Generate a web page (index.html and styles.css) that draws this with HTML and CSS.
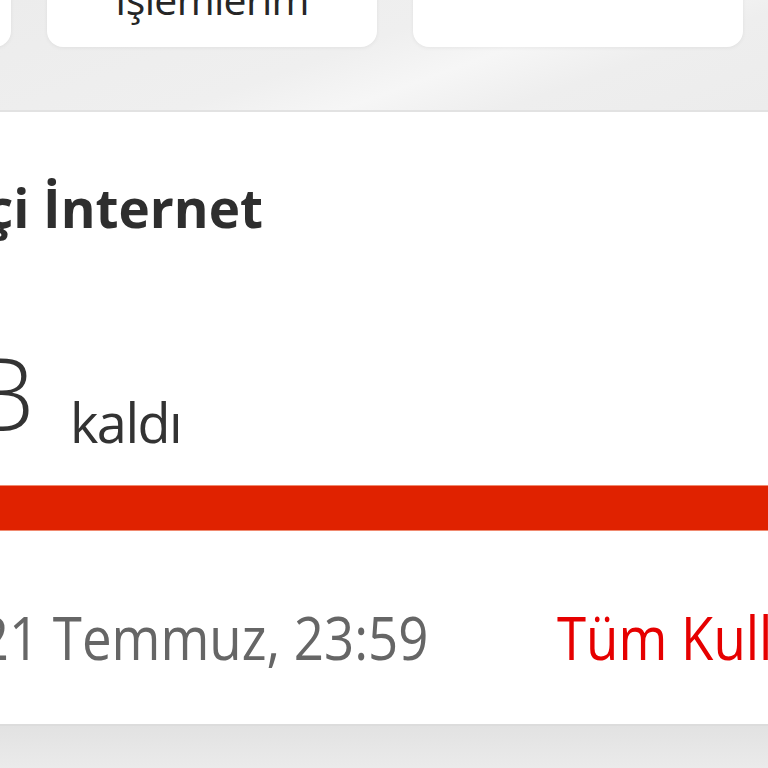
FILE: index.html
```html
<!DOCTYPE html>
<html lang="tr">
<head>
<meta charset="utf-8">
<title>Yurtiçi İnternet</title>
<link rel="stylesheet" href="styles.css">
</head>
<body>
  <div class="top">
    <div class="cards">
      <div class="card"></div>
      <div class="card"><span class="card-label">İşlemlerim</span></div>
      <div class="card"></div>
      <div class="card"></div>
    </div>
  </div>
  <main class="usage">
    <div class="clip" style="width:263px">
      <h2 class="title">Yurtiçi İnternet</h2>
    </div>
    <div class="amount">
      <div class="clip" style="width:34px">
        <span class="big">12 GB</span>
      </div>
      <span class="left">kaldı</span>
    </div>
    <div class="bar"></div>
    <div class="meta">
      <div class="clip" style="width:428px">
        <span class="date">Yenilenme: 21 Temmuz, 23:59</span>
      </div>
      <a class="link">Tüm Kullanımlar</a>
    </div>
  </main>
  <div class="bottom"></div>
</body>
</html>
```
FILE: styles.css
```css
html, body {
  margin: 0;
  padding: 0;
}
body {
  width: 768px;
  height: 768px;
  overflow: hidden;
  background: #e8e8e8;
  font-family: "Open Sans", "Liberation Sans", sans-serif;
}
.top {
  height: 110px;
  border-bottom: 2px solid #e2e2e2;
  background: linear-gradient(160deg, #ececec 0%, #efefef 45%, #f6f6f6 60%, #eeeeee 75%, #ececec 100%);
  overflow: hidden;
}
.cards {
  display: flex;
  gap: 36px;
  margin-left: -319px;
  margin-top: -153px;
}
.card {
  flex: 0 0 330px;
  height: 200px;
  background: #fff;
  border-radius: 16px;
  box-shadow: 0 1px 4px rgba(0, 0, 0, 0.06);
  display: flex;
  align-items: flex-end;
  justify-content: center;
}
.card-label {
  font-size: 41px;
  line-height: 41px;
  color: #262626;
  margin-bottom: 27px;
  white-space: nowrap;
  letter-spacing: -0.7px;
}
.usage {
  background: #fff;
  padding: 69px 0 57px;
}
.clip {
  display: flex;
  justify-content: flex-end;
  white-space: nowrap;
}
.title {
  margin: 0;
  font-size: 53px;
  line-height: 53px;
  font-weight: 700;
  color: #2e2e2e;
}
.amount {
  display: flex;
  align-items: flex-start;
  margin-top: 108px;
}
.big {
  font-size: 101px;
  line-height: 101px;
  font-weight: 300;
  color: #333;
}
.left {
  margin-left: 36px;
  margin-top: 53px;
  font-size: 54px;
  line-height: 54px;
  letter-spacing: -1.5px;
  color: #333;
}
.bar {
  margin-top: 36px;
  height: 46px;
  background: #e02200;
  border-top: 1px solid #ef8a70;
  border-bottom: 1px solid #f08a70;
  box-sizing: border-box;
}
.meta {
  display: flex;
  align-items: flex-start;
  margin-top: 76px;
}
.date, .link {
  display: inline-block;
  font-size: 60px;
  line-height: 60px;
  font-weight: 400;
  white-space: nowrap;
}
.date {
  color: #666;
  transform: scaleX(0.88);
  transform-origin: right center;
}
.link {
  margin-left: 129px;
  color: #e60000;
  transform: scaleX(0.88);
  transform-origin: left center;
}
.bottom {
  height: 44px;
  border-top: 2px solid #dcdcdc;
  background: linear-gradient(180deg, #e2e2e2, #ebebeb);
}
```
